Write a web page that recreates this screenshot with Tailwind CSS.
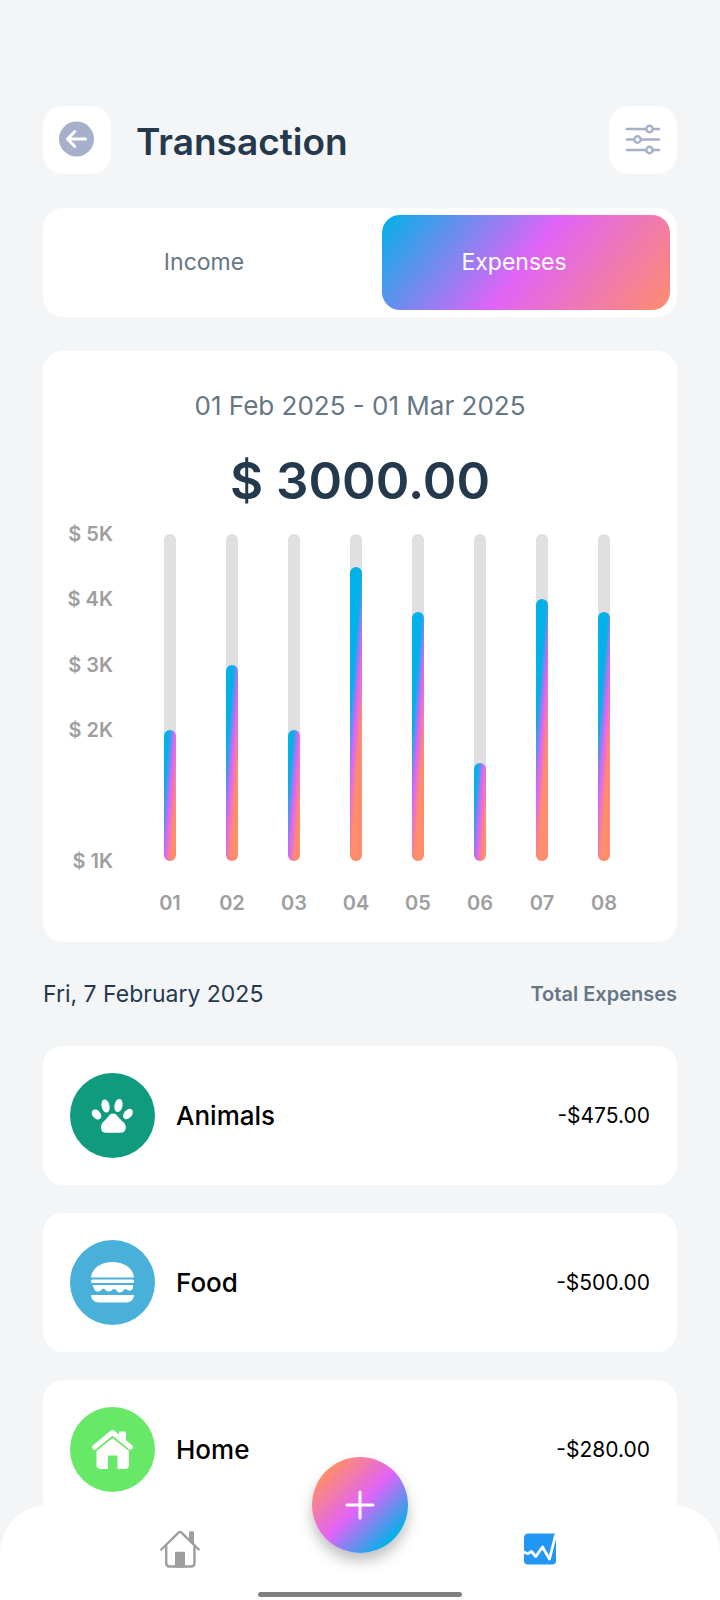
<!DOCTYPE html>
<html lang="en">
<head>
<meta charset="utf-8">
<meta name="viewport" content="width=device-width, initial-scale=1">
<title>Transaction</title>
<script src="https://cdn.jsdelivr.net/npm/@tailwindcss/browser@4"></script>
</head>
<body class="min-h-screen bg-[#f3f5f7] font-['Inter','Noto_Sans',sans-serif] text-black">
<main class="px-[43px] pt-[106px] pb-20">

  <header class="flex items-center">
    <button type="button" aria-label="Back" class="flex size-[68px] items-center justify-center rounded-[20px] bg-white pb-0.5">
      <svg class="size-9" viewBox="0 0 36 36" fill="none">
        <circle cx="17.500" cy="18" r="17.500" fill="#a6b0ca"/>
        <path d="M26.500 18H9M15.800 10.500L8.500 18L15.800 25.500" stroke="#fff" stroke-width="3" stroke-linecap="round" stroke-linejoin="round"/>
      </svg>
    </button>
    <h1 class="ml-[25px] flex-1 pt-[3px] text-[37px] leading-[44px] font-semibold text-[#25394d]">Transaction</h1>
    <button type="button" aria-label="Filter" class="flex size-[68px] items-center justify-center rounded-[20px] bg-white pb-0.5">
      <svg class="size-9" viewBox="0 0 36 36" fill="none" stroke="#a6b0ca" stroke-width="2.700" stroke-linecap="round">
        <path d="M2 8H34M2 18.500H34M2 29H34"/>
        <g fill="#fff" stroke-width="2.400">
          <circle cx="24.500" cy="8" r="3.200"/><circle cx="12.500" cy="18.500" r="3.200"/><circle cx="24.500" cy="29" r="3.200"/>
        </g>
      </svg>
    </button>
  </header>

  <div class="mt-[34px] grid h-[109px] grid-cols-[1fr_288px] gap-4 rounded-[20px] bg-white p-[7px] text-[23px]">
    <button type="button" class="pr-2 text-[#667685]" aria-pressed="false">Income</button>
    <button type="button" aria-pressed="true" class="rounded-[18px] bg-[linear-gradient(128deg,#00b2e7,#e064f7,#ff8d6c)] pr-6 text-white">Expenses</button>
  </div>

  <section class="mt-[34px] rounded-[20px] bg-white pt-[37px] pb-[27px]">
    <p class="text-center text-[26px] leading-9 text-[#667685]">01 Feb 2025 - 01 Mar 2025</p>
    <p class="mt-[27px] text-center text-[51px] leading-[60px] font-semibold text-[#25394d]">$ 3000.00</p>

    <div class="mt-[11px] flex gap-[26px] pr-[42px] pl-[27px] text-xl leading-6 font-semibold text-[#9e9e9e]">
      <div class="flex h-[351px] w-[43px] flex-col items-end justify-between whitespace-nowrap">
        <span>$ 5K</span><span>$ 4K</span><span>$ 3K</span><span>$ 2K</span><span class="h-6"></span><span>$ 1K</span>
      </div>
      <div class="grid flex-1 grid-cols-8 pt-3">
        <div class="flex flex-col items-center gap-[30px]"><div class="flex h-[327px] w-3 items-end rounded-full bg-[#e0e0e0]"><div class="w-full rounded-full bg-[linear-gradient(94.5deg,#00b2e7_calc(50%-6px),#e064f7_50%,#ff8d6c_calc(50%+6px))]" style="height:40%"></div></div><span>01</span></div>
        <div class="flex flex-col items-center gap-[30px]"><div class="flex h-[327px] w-3 items-end rounded-full bg-[#e0e0e0]"><div class="w-full rounded-full bg-[linear-gradient(94.5deg,#00b2e7_calc(50%-6px),#e064f7_50%,#ff8d6c_calc(50%+6px))]" style="height:60%"></div></div><span>02</span></div>
        <div class="flex flex-col items-center gap-[30px]"><div class="flex h-[327px] w-3 items-end rounded-full bg-[#e0e0e0]"><div class="w-full rounded-full bg-[linear-gradient(94.5deg,#00b2e7_calc(50%-6px),#e064f7_50%,#ff8d6c_calc(50%+6px))]" style="height:40%"></div></div><span>03</span></div>
        <div class="flex flex-col items-center gap-[30px]"><div class="flex h-[327px] w-3 items-end rounded-full bg-[#e0e0e0]"><div class="w-full rounded-full bg-[linear-gradient(94.5deg,#00b2e7_calc(50%-6px),#e064f7_50%,#ff8d6c_calc(50%+6px))]" style="height:90%"></div></div><span>04</span></div>
        <div class="flex flex-col items-center gap-[30px]"><div class="flex h-[327px] w-3 items-end rounded-full bg-[#e0e0e0]"><div class="w-full rounded-full bg-[linear-gradient(94.5deg,#00b2e7_calc(50%-6px),#e064f7_50%,#ff8d6c_calc(50%+6px))]" style="height:76%"></div></div><span>05</span></div>
        <div class="flex flex-col items-center gap-[30px]"><div class="flex h-[327px] w-3 items-end rounded-full bg-[#e0e0e0]"><div class="w-full rounded-full bg-[linear-gradient(94.5deg,#00b2e7_calc(50%-6px),#e064f7_50%,#ff8d6c_calc(50%+6px))]" style="height:30%"></div></div><span>06</span></div>
        <div class="flex flex-col items-center gap-[30px]"><div class="flex h-[327px] w-3 items-end rounded-full bg-[#e0e0e0]"><div class="w-full rounded-full bg-[linear-gradient(94.5deg,#00b2e7_calc(50%-6px),#e064f7_50%,#ff8d6c_calc(50%+6px))]" style="height:80%"></div></div><span>07</span></div>
        <div class="flex flex-col items-center gap-[30px]"><div class="flex h-[327px] w-3 items-end rounded-full bg-[#e0e0e0]"><div class="w-full rounded-full bg-[linear-gradient(94.5deg,#00b2e7_calc(50%-6px),#e064f7_50%,#ff8d6c_calc(50%+6px))]" style="height:76%"></div></div><span>08</span></div>
      </div>
    </div>
  </section>

  <div class="mt-9 flex items-center justify-between leading-8">
    <h2 class="text-[23px] text-[#25394d]">Fri, 7 February 2025</h2>
    <span class="text-xl font-semibold text-[#667685]">Total Expenses</span>
  </div>

  <ul class="mt-9 flex flex-col gap-7">
    <li class="flex h-[139px] items-center rounded-[20px] bg-white px-[27px]">
      <svg class="size-[85px]" viewBox="0 0 85 85">
        <circle cx="42.500" cy="42.500" r="42.500" fill="#119b7e"/>
        <g fill="#fff">
          <ellipse cx="26.500" cy="41.500" rx="4" ry="5.700" transform="rotate(-40 26.500 41.500)"/>
          <ellipse cx="35.500" cy="33" rx="4" ry="6.600" transform="rotate(-12 35.500 33)"/>
          <ellipse cx="48.500" cy="32.500" rx="4" ry="6.600" transform="rotate(12 48.500 32.500)"/>
          <ellipse cx="58" cy="41" rx="4" ry="5.900" transform="rotate(40 58 41)"/>
          <path d="M43 40.500c-3 0-4.500 3-7 5.800C33.500 49 31 50.500 31 54.500c0 3.500 2 5.200 5 5.200h14.500c3 0 5.300-1.700 5.300-5.200 0-4-3-5.500-5.500-8.200-2.300-2.800-4.300-5.800-7.300-5.800z"/>
        </g>
      </svg>
      <span class="ml-[21px] flex-1 text-[26px] font-medium">Animals</span>
      <span class="text-[21px]">-$475.00</span>
    </li>
    <li class="flex h-[139px] items-center rounded-[20px] bg-white px-[27px]">
      <svg class="size-[85px]" viewBox="0 0 85 85">
        <circle cx="42.500" cy="42.500" r="42.500" fill="#49b0d9"/>
        <g fill="#fff">
          <path d="M21 37.500C22 28 31 22 42.500 22S63 28 64 37.500z"/>
          <rect x="21" y="39.500" width="43" height="3.500" rx="1.500"/>
          <path d="M22.500 45H63v2c0 4-4.500 4.500-6.500 2.500-1.500-1-2 0-4 2-2 1.500-3.500 1.500-5.500-.5-2.500-2.500-3-2.500-5.500-.5-2 1.500-3.500 1.500-5.500 0-2.500-2-3-2.500-5 0-2.500 2-6 1-6.500-1z"/>
          <path d="M21 55H64c0 4.500-3.500 7.500-7.500 7.500H29c-4.500 0-8-3-8-7.500z"/>
        </g>
      </svg>
      <span class="ml-[21px] flex-1 text-[26px] font-medium">Food</span>
      <span class="text-[21px]">-$500.00</span>
    </li>
    <li class="flex h-[139px] items-center rounded-[20px] bg-white px-[27px]">
      <svg class="size-[85px]" viewBox="0 0 85 85">
        <circle cx="42.500" cy="42.500" r="42.500" fill="#67e866"/>
        <g fill="#fff">
          <path d="M24.500 40.200L42.500 25.500L60.500 40.200" fill="none" stroke="#fff" stroke-width="5" stroke-linecap="round" stroke-linejoin="round"/>
          <path d="M49 25.500q0-1 1-1h5q1 0 1 1V35l-7-5z"/>
          <path d="M26.500 43.500L42.500 31l16.500 12.500V58q0 4-4 4h-7.500V49.500q0-1-1-1h-7.500q-1 0-1 1V62h-7.500q-4 0-4-4z"/>
          <path d="M26 43.200L42.500 29.800L59 43.200" fill="none" stroke="#67e866" stroke-width="1.400"/>
        </g>
      </svg>
      <span class="ml-[21px] flex-1 text-[26px] font-medium">Home</span>
      <span class="text-[21px]">-$280.00</span>
    </li>
  </ul>
</main>

<nav class="fixed inset-x-0 bottom-0 rounded-t-[48px] bg-white pb-[3px]" aria-label="Main">
  <div class="grid h-[87px] grid-cols-2">
    <a href="#home" aria-label="Home" class="flex items-center justify-center">
      <svg class="size-10" viewBox="0 0 40 40" fill="none" stroke="#9e9e9e" stroke-width="2.400" stroke-linecap="round" stroke-linejoin="round">
        <path d="M1.300 20.500L18.500 3.600q1.500-1.400 3 0L38.700 20.500M6.200 16V34q0 3.500 3.500 3.500H31q3.500 0 3.500-3.500V16"/>
        <path d="M30.200 3.500h2.600v11l-2.600-2.500z" fill="#9e9e9e"/>
        <path d="M16.200 24h7.600v13.500h-7.600z" fill="#9e9e9e"/>
      </svg>
    </a>
    <a href="#stats" aria-label="Statistics" class="flex items-center justify-center">
      <svg class="size-8" viewBox="0 0 32 32">
        <path d="M4.500.5H31L32 3V27.500Q32 31.500 28 31.500H4Q0 31.500 0 27.500V5Q0 .5 4.500.5z" fill="#2196f3"/>
        <path d="M-1 18.500L3 20.500Q4.200 20.800 5 20L7.500 18.500L11.800 23.500L18.500 14L25.500 26L31.700 1.500" fill="none" stroke="#fff" stroke-width="2.800" stroke-linejoin="round"/>
      </svg>
    </a>
  </div>
  <div class="mx-auto h-[5px] w-[204px] rounded-full bg-[#808080]"></div>
  <button type="button" aria-label="Add transaction" class="absolute -top-12 left-1/2 flex size-24 -translate-x-1/2 items-center justify-center rounded-full bg-[linear-gradient(135deg,#ff8d6c_calc(50%-48px),#e064f7_50%,#00b2e7_calc(50%+48px))] shadow-[0_8px_14px_rgba(0,0,0,0.25)]">
    <svg class="size-[30px]" viewBox="0 0 30 30" stroke="#fff" stroke-width="3" stroke-linecap="round"><path d="M15 2V28M2 15H28"/></svg>
  </button>
</nav>
</body>
</html>
